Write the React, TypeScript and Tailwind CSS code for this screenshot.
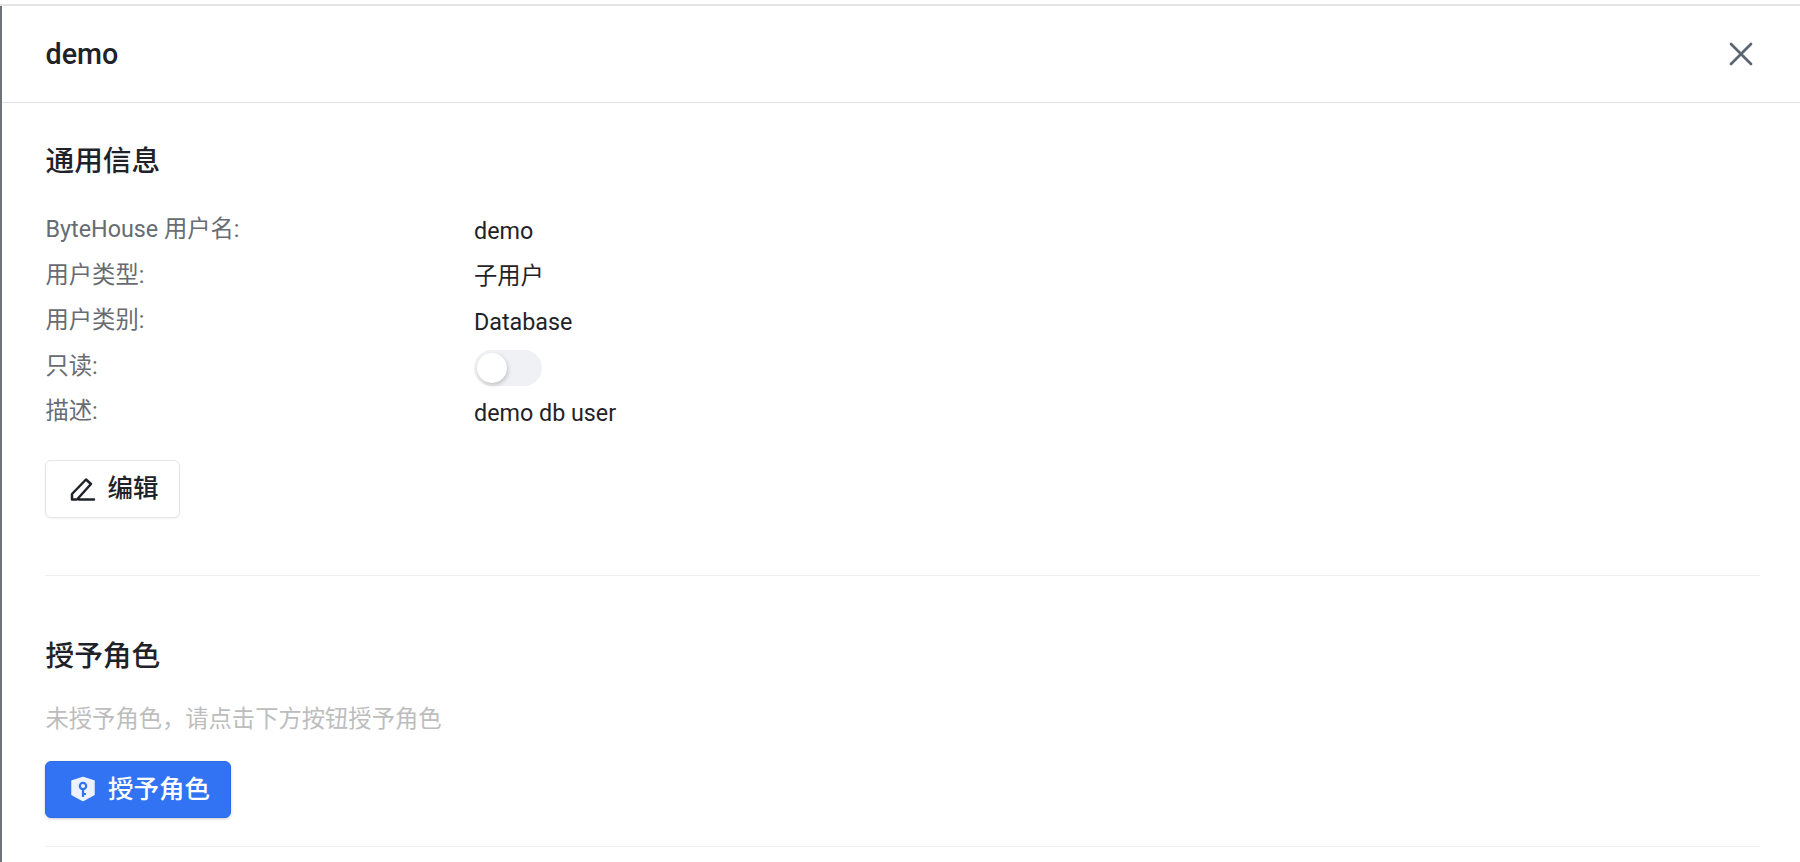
import React from "react";

const font = "font-['Roboto','Noto_Sans_CJK_SC',sans-serif]";

const rows: [string, React.ReactNode][] = [
  ["ByteHouse 用户名:", "demo"],
  ["用户类型:", "子用户"],
  ["用户类别:", "Database"],
  ["只读:", <div className="mt-[2px] h-9 w-[68px] rounded-full bg-[#f0f1f4] p-[3px]"><div className="h-[30px] w-[30px] rounded-full bg-white shadow-[1px_2px_4px_rgba(0,0,0,0.2)]" /></div>],
  ["描述:", "demo db user"],
];

export default function App() {
  return (
    <div className={`${font} h-[862px] overflow-hidden bg-white pt-1 text-[#1f2329]`}>
      <div className="h-[2px] bg-[#e4e4e4]" />
      <div className="h-[856px] border-l-2 border-[#6f7277]">
        <header className="flex h-[97px] items-center justify-between border-b border-[#e2e3e8] pl-[43.5px] pr-[46px]">
          <h1 className="text-[28.7px] font-medium leading-9">demo</h1>
          <svg width="26" height="26" viewBox="0 0 26 26" fill="none" stroke="#5b6473" strokeWidth="2.7" strokeLinecap="round">
            <path d="M3 3 23 23M23 3 3 23" />
          </svg>
        </header>
        <main className="pl-[43px] pr-[40px]">
          <section className="border-b border-[#eeeff2] pb-[57px] pt-[38px]">
            <h2 className="pl-[0.5px] text-[28.7px] font-medium leading-10">通用信息</h2>
            <div className="mt-[28px] flex flex-col pl-[0.5px]">
              {rows.map(([k, v]) => (
                <div key={k} className="flex h-[45.5px] items-start text-[23.3px] leading-[40px]">
                  <span className="w-[428.5px] text-[#676b72]">{k}</span>
                  <div className="flex h-[43.5px] items-center">{v}</div>
                </div>
              ))}
            </div>
            <button className="mt-[23px] flex h-[58px] w-[135px] items-center justify-center gap-[11px] rounded-[6px] border border-[#e4e5e8] bg-white pl-1 text-[25.5px] font-medium shadow-[0_1px_2px_rgba(0,0,0,0.05)]">
              <svg width="26" height="26" viewBox="0 0 26 26" fill="none" stroke="#1f2329" strokeWidth="2.5" strokeLinejoin="round" strokeLinecap="round">
                <path d="M2 23.5V18L16 3.5 21 8 7 23.5H2M9 23.5H24" />
              </svg>
              编辑
            </button>
          </section>
          <section className="border-b border-[#eeeff2] pb-[28px] pt-[60px]">
            <h2 className="pl-[0.5px] text-[28.7px] font-medium leading-10">授予角色</h2>
            <p className="mt-[27px] pl-[0.5px] text-[23.3px] leading-8 text-[#bdbdbd]">未授予角色，请点击下方按钮授予角色</p>
            <button className="mt-[26px] flex h-[57px] w-[186px] items-center justify-center gap-[12px] rounded-[6px] border border-[#2f6de6] bg-[#3173f2] pl-1 text-[25.5px] font-medium text-white shadow-[0_1px_3px_rgba(0,0,0,0.2)]">
              <svg width="26" height="26" viewBox="0 0 26 26">
                <path fill="#edf2fe" stroke="#edf2fe" strokeWidth="1.5" strokeLinejoin="round" d="M13 1.5 24 5V18.5L13 24.5 2 18.5V5Z" />
                <circle cx="13" cy="10" r="3.2" fill="none" stroke="#3173f2" strokeWidth="2.2" />
                <path d="M13 13V21M13 18H16" fill="none" stroke="#3173f2" strokeWidth="2.2" />
              </svg>
              授予角色
            </button>
          </section>
        </main>
      </div>
    </div>
  );
}
